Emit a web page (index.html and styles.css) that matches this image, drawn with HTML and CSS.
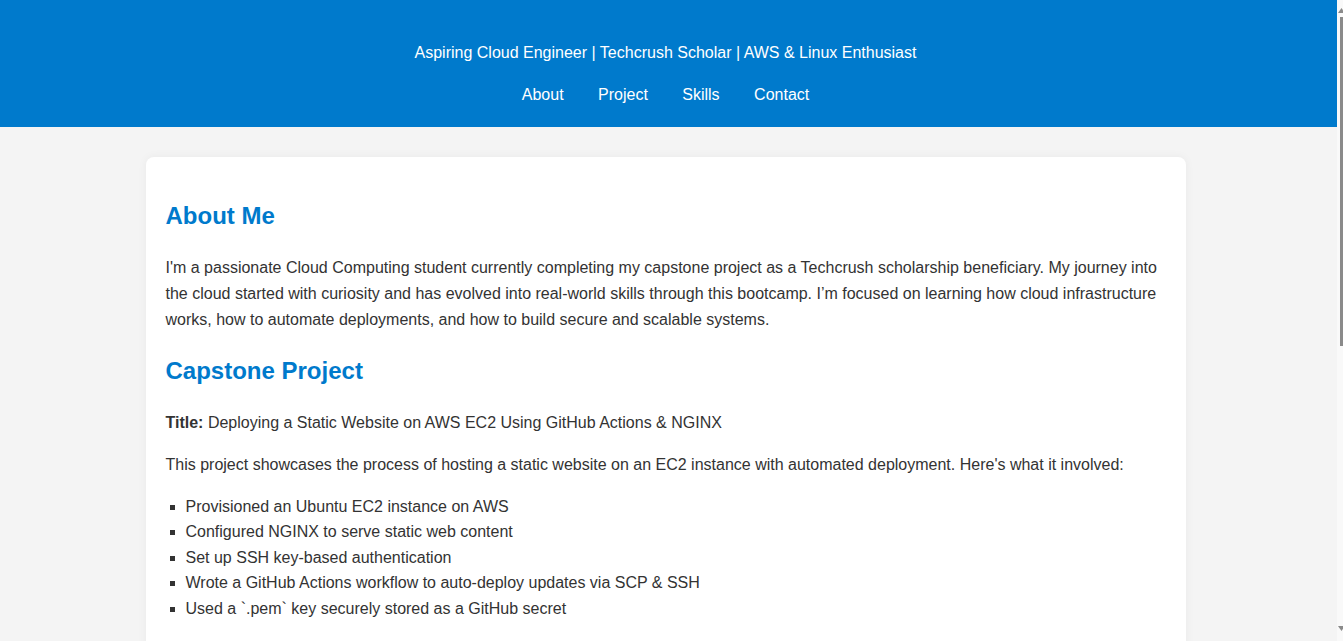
FILE: index.html
```html
<!DOCTYPE html>
<html lang="en">
<head>
<meta charset="UTF-8">
<title>Portfolio</title>
<link rel="stylesheet" href="styles.css">
</head>
<body>
<header class="site-header">
  <p class="tagline">Aspiring Cloud Engineer | Techcrush Scholar | AWS &amp; Linux Enthusiast</p>
  <nav class="nav">
    <a href="#about">About</a>
    <a href="#project">Project</a>
    <a href="#skills">Skills</a>
    <a href="#contact">Contact</a>
  </nav>
</header>
<main class="card">
  <section id="about">
    <h2>About Me</h2>
    <p>I'm a passionate Cloud Computing student currently completing my capstone project as a Techcrush scholarship beneficiary. My journey into the cloud started with curiosity and has evolved into real-world skills through this bootcamp. I’m focused on learning how cloud infrastructure works, how to automate deployments, and how to build secure and scalable systems.</p>
  </section>
  <section id="project">
    <h2>Capstone Project</h2>
    <p><strong>Title:</strong> Deploying a Static Website on AWS EC2 Using GitHub Actions &amp; NGINX</p>
    <p>This project showcases the process of hosting a static website on an EC2 instance with automated deployment. Here's what it involved:</p>
    <ul class="list">
      <li>Provisioned an Ubuntu EC2 instance on AWS</li>
      <li>Configured NGINX to serve static web content</li>
      <li>Set up SSH key-based authentication</li>
      <li>Wrote a GitHub Actions workflow to auto-deploy updates via SCP &amp; SSH</li>
      <li>Used a `.pem` key securely stored as a GitHub secret</li>
    </ul>
  </section>
  <section id="skills">
    <h2>Skills</h2>
    <ul class="list">
      <li>AWS (EC2, IAM, S3)</li>
      <li>Linux Administration</li>
      <li>NGINX</li>
      <li>Git &amp; GitHub Actions</li>
    </ul>
  </section>
  <section id="contact">
    <h2>Contact</h2>
    <p>Feel free to reach out via GitHub or LinkedIn.</p>
  </section>
</main>
<div class="scrollbar" aria-hidden="true">
  <svg width="6" height="641" viewBox="0 0 6 641">
    <rect x="0" y="0" width="6" height="641" fill="#f9f9f9"/>
    <polygon points="1,13 4.5,8 8,13" fill="#8a8a8a"/>
    <rect x="3" y="17" width="3" height="329" fill="#8a8a8a"/>
    <polygon points="1,626 8,626 4.5,631" fill="#8a8a8a"/>
  </svg>
</div>
</body>
</html>
```

FILE: styles.css
```css
html, body {
  margin: 0;
  padding: 0;
}
html {
  background: #f4f4f4;
}
body {
  font-family: "Liberation Sans", Arial, sans-serif;
  font-size: 16px;
  line-height: 1.6;
  color: #333;
  background: #f4f4f4;
  padding-right: 12px;
  overflow-x: hidden;
}
.site-header {
  background: #007acc;
  color: #fff;
  text-align: center;
  padding: 24px 6px 20px 0;
  margin-right: -6px;
}
.tagline {
  margin: 16px 0;
}
.nav a {
  color: #fff;
  text-decoration: none;
  margin: 0 15px;
}
.card {
  display: block;
  max-width: 1000px;
  margin: 30px auto;
  padding: 20px;
  background: #fff;
  border-radius: 8px;
  box-shadow: 0 0 10px rgba(0, 0, 0, 0.05);
}
.card h2 {
  color: #007acc;
  font-size: 24px;
  margin: 0.83em 0;
}
.list {
  list-style: square;
  padding-left: 20px;
}
.scrollbar {
  position: fixed;
  top: 0;
  right: 0;
  width: 6px;
  height: 100%;
  line-height: 0;
}
```
